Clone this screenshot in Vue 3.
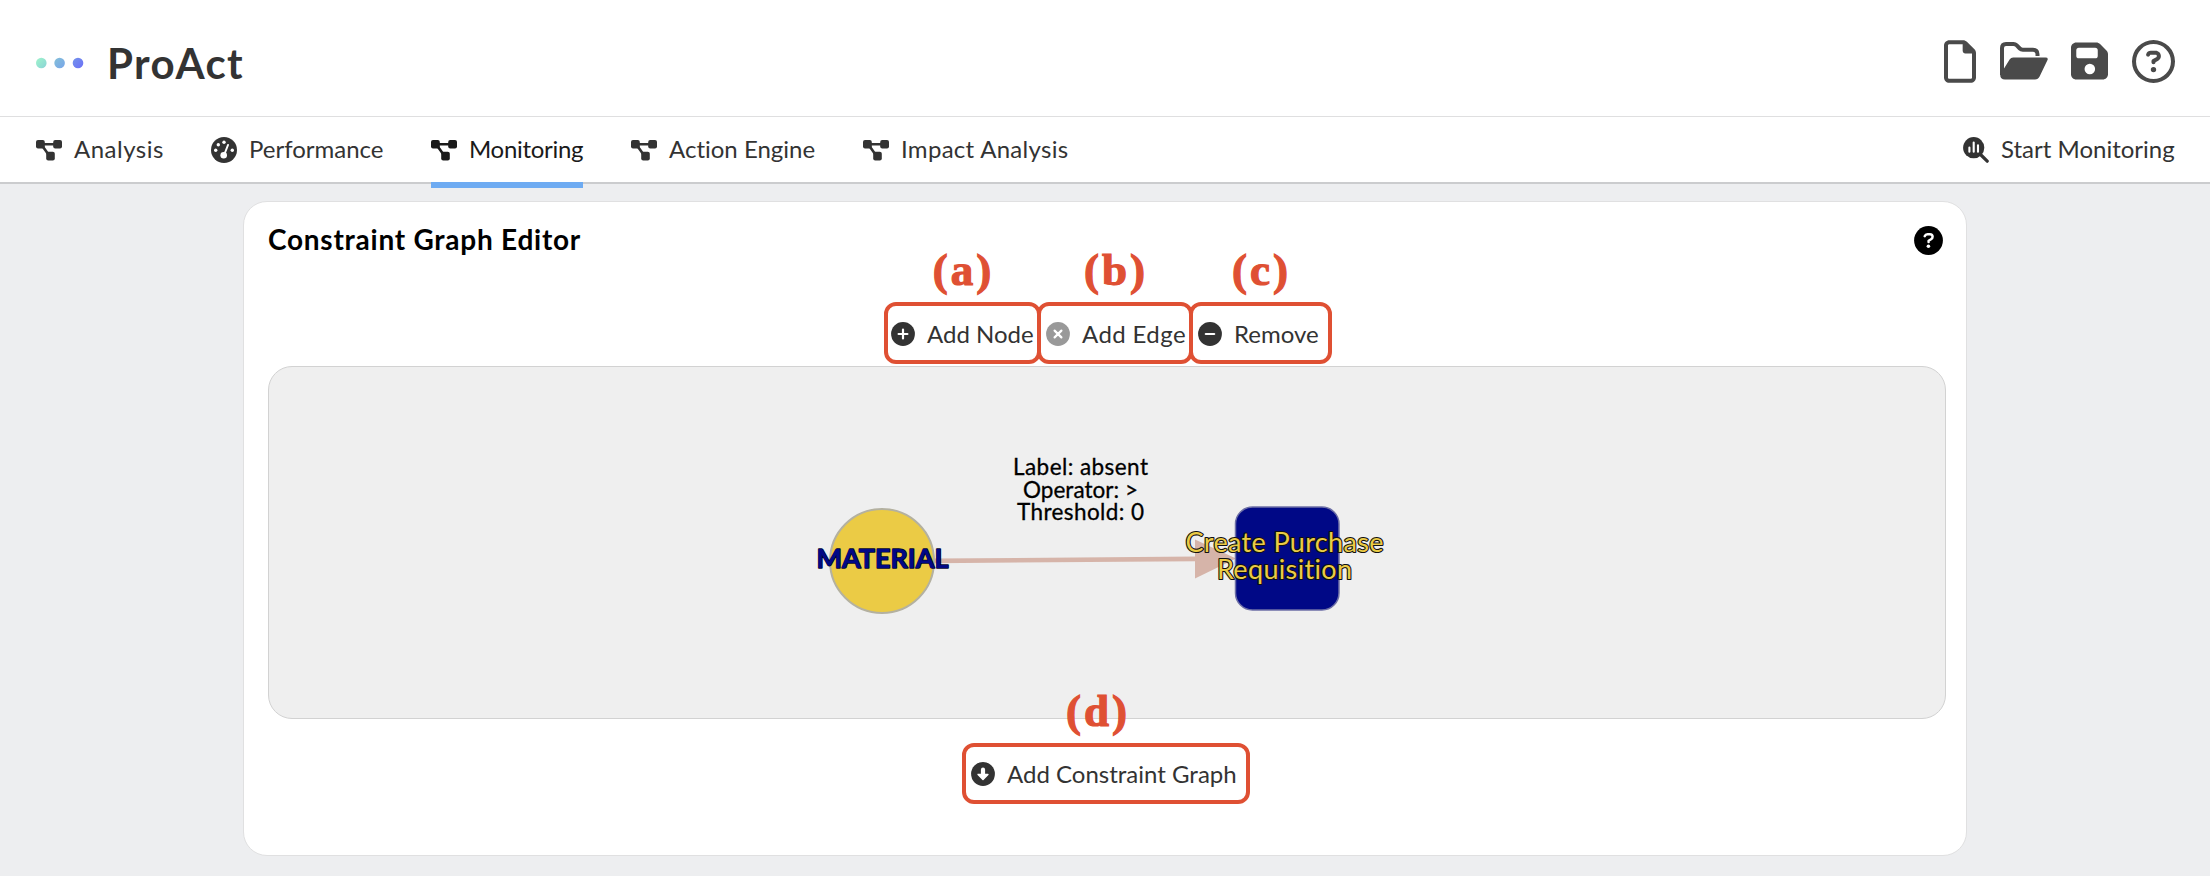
<script setup>
const tabs = [
  { key: 'analysis', label: 'Analysis', icon: 'nodes' },
  { key: 'performance', label: 'Performance', icon: 'gauge' },
  { key: 'monitoring', label: 'Monitoring', icon: 'nodes', active: true },
  { key: 'action', label: 'Action Engine', icon: 'nodes' },
  { key: 'impact', label: 'Impact Analysis', icon: 'nodes' },
]

const tools = [
  { key: 'add-node', label: 'Add Node', tag: '(a)', icon: 'M12 7.6v8.8M7.6 12h8.8' },
  { key: 'add-edge', label: 'Add Edge', tag: '(b)', icon: 'M8.6 8.6l6.8 6.8M15.4 8.6l-6.8 6.8', disabled: true },
  { key: 'remove', label: 'Remove', tag: '(c)', icon: 'M7.8 12h8.4' },
]
</script>

<template>
  <div class="app">
    <header class="header">
      <svg class="logo" width="48" height="12" viewBox="0 0 48 12">
        <defs>
          <linearGradient id="dotA" x1="0" y1="0" x2="1" y2="1"><stop offset="0" stop-color="#9ff5cb" /><stop offset="1" stop-color="#8ad2d6" /></linearGradient>
          <linearGradient id="dotB" x1="0" y1="0" x2="1" y2="1"><stop offset="0" stop-color="#84c0d8" /><stop offset="1" stop-color="#78a5ea" /></linearGradient>
          <linearGradient id="dotC" x1="0" y1="0" x2="1" y2="1"><stop offset="0" stop-color="#7393ea" /><stop offset="1" stop-color="#6c70f8" /></linearGradient>
        </defs>
        <circle cx="5.3" cy="6" r="5.3" fill="url(#dotA)" />
        <circle cx="23.6" cy="6" r="5.3" fill="url(#dotB)" />
        <circle cx="42" cy="6" r="5.3" fill="url(#dotC)" />
      </svg>
      <h1 class="brand">ProAct</h1>
      <div class="actions">
        <svg class="file" width="32" height="43" viewBox="0 0 384 512"><path fill="currentColor" d="M320 464c8.800 0 16-7.200 16-16V160H256c-17.700 0-32-14.300-32-32V48H64c-8.800 0-16 7.200-16 16V448c0 8.800 7.200 16 16 16H320zM0 64C0 28.700 28.700 0 64 0H229.500c17 0 33.300 6.700 45.300 18.700l90.500 90.500c12 12 18.700 28.300 18.700 45.300V448c0 35.300-28.700 64-64 64H64c-35.300 0-64-28.700-64-64V64z" /></svg>
        <svg class="folder" width="48" height="38" viewBox="0 0 48 38"><path d="M2 33V6q0-4 4-4h7.500q1.800 0 3 1.200l3.300 3.300q1.200 1.200 3 1.200H33q4.500 0 4.500 4.500V14" fill="none" stroke="currentColor" stroke-width="4" /><path d="M2.500 29L9.600 17.500q1.300-2 3.600-2H45.500q3 0 2 2.500L39.600 34.500q-1.500 3-4.600 3H5q-4.800 0-4.800-4.800z" fill="currentColor" /></svg>
        <svg class="save" width="37" height="38" viewBox="0 32 448 448"><path fill="currentColor" fill-rule="evenodd" d="M64 32C28.700 32 0 60.700 0 96V416c0 35.300 28.700 64 64 64H384c35.300 0 64-28.700 64-64V173.300c0-17-6.700-33.300-18.700-45.300L352 50.700C340 38.700 323.700 32 306.700 32H64zm32 64H292a32 32 0 0 1 32 32V192a32 32 0 0 1-32 32H96a32 32 0 0 1-32-32V128a32 32 0 0 1 32-32zM228 288a64 64 0 1 1 0 128 64 64 0 1 1 0-128z" /></svg>
        <svg class="help" width="43" height="43" viewBox="0 0 512 512"><path fill="currentColor" d="M464 256A208 208 0 1 0 48 256a208 208 0 1 0 416 0zM0 256a256 256 0 1 1 512 0A256 256 0 1 1 0 256zm169.800-90.700c7.900-22.300 29.100-37.300 52.800-37.300h58.300c34.900 0 63.100 28.300 63.100 63.100c0 22.600-12.100 43.500-31.700 54.800L280 264.400c-.2 13-10.900 23.600-24 23.600c-13.300 0-24-10.700-24-24V250.500c0-8.600 4.600-16.500 12.100-20.800l44.300-25.400c4.700-2.700 7.600-7.700 7.600-13.100c0-8.400-6.800-15.100-15.100-15.100H222.600c-3.400 0-6.400 2.100-7.500 5.300l-.4 1.200c-4.400 12.500-18.200 19-30.600 14.600s-19-18.200-14.600-30.600l.4-1.200zM224 352a32 32 0 1 1 64 0 32 32 0 1 1-64 0z" /></svg>
      </div>
    </header>

    <nav class="nav">
      <a v-for="tab in tabs" :key="tab.key" class="tab" :class="[tab.key, { active: tab.active }]">
        <svg v-if="tab.icon === 'nodes'" width="26" height="26" viewBox="0 0 26 26">
          <path d="M4 7.300H22M5 7l8.500 12" stroke="currentColor" stroke-width="2.600" />
          <rect x="0" y="3" width="8.800" height="8.600" rx="2" fill="currentColor" />
          <rect x="17.200" y="3" width="8.800" height="8.600" rx="2" fill="currentColor" />
          <rect x="10.200" y="14.800" width="8.600" height="8.600" rx="2" fill="currentColor" />
        </svg>
        <svg v-else width="26" height="26" viewBox="0 0 26 26">
          <circle cx="13" cy="13" r="13" fill="currentColor" />
          <g fill="#fff">
            <circle cx="13" cy="5.300" r="1.700" /><circle cx="7.300" cy="7.700" r="1.700" />
            <circle cx="4.700" cy="13.300" r="1.700" /><circle cx="21.300" cy="13.300" r="1.700" />
            <circle cx="12.700" cy="18.300" r="3.300" />
          </g>
          <path d="M13.300 17.500L17 8" stroke="#fff" stroke-width="2" stroke-linecap="round" />
        </svg>
        <span>{{ tab.label }}</span>
      </a>
      <a class="tab start">
        <svg width="26" height="26" viewBox="0 0 26 26">
          <circle cx="10.700" cy="10.700" r="10.600" fill="currentColor" />
          <path d="M17.500 17.500l6.700 6.700" stroke="currentColor" stroke-width="3.200" stroke-linecap="round" />
          <path d="M6.400 10.500v4.300M10.700 5.500v9.300M15 8.300v6.500" stroke="#fff" stroke-width="2.100" stroke-linecap="round" />
        </svg>
        <span>Start Monitoring</span>
      </a>
    </nav>

    <main class="card">
      <div class="card-head">
        <h2>Constraint Graph Editor</h2>
        <svg width="29" height="29" viewBox="0 0 29 29">
          <circle cx="14.500" cy="14.500" r="14.400" fill="#000" />
          <path d="M10.700 10.200q.8-2 2.800-2h2.300q2.800 0 2.800 2.600 0 1.600-1.500 2.400l-2.500 1.500v1.200" fill="none" stroke="#fff" stroke-width="2.500" stroke-linecap="round" stroke-linejoin="round" />
          <circle cx="14.400" cy="20.200" r="1.800" fill="#fff" />
        </svg>
      </div>

      <div class="toolbar">
        <button v-for="tool in tools" :key="tool.key" class="tool" :class="[tool.key, { disabled: tool.disabled }]">
          <svg width="24" height="24" viewBox="0 0 24 24">
            <circle cx="12" cy="12" r="11.900" fill="currentColor" />
            <path :d="tool.icon" stroke="#fff" stroke-width="2.200" stroke-linecap="round" />
          </svg>
          <span class="label">{{ tool.label }}</span>
          <span class="tag">{{ tool.tag }}</span>
        </button>
      </div>

      <section class="canvas">
        <svg width="1676" height="351" viewBox="269 367 1676 351">
          <path d="M934 560.900L1197 558.900" stroke="#d6b4a9" stroke-width="4.600" />
          <path d="M1195 539.600V578.400L1236 558.400z" fill="#d6b4a9" />
          <circle cx="882" cy="561" r="52" fill="#ebcb45" stroke="#b4b1a0" stroke-width="2" />
          <rect x="1235.500" y="507" width="103.500" height="103" rx="17" fill="#000886" stroke="#6d6fa6" stroke-width="1.500" />
          <g class="edge-label">
            <text x="1080.500" y="475.300" textLength="135">Label: absent</text>
            <text x="1080.500" y="497.800" textLength="115">Operator: &gt;</text>
            <text x="1080.500" y="520.300" textLength="127">Threshold: 0</text>
          </g>
          <text class="node-label source" x="882.500" y="568.300" textLength="132">MATERIAL</text>
          <g class="node-label target">
            <text x="1284.500" y="552" textLength="198">Create Purchase</text>
            <text x="1284.500" y="579.300" textLength="135">Requisition</text>
          </g>
        </svg>
      </section>

      <button class="tool add-graph">
        <svg width="24" height="24" viewBox="0 0 24 24">
          <circle cx="12" cy="12" r="11.900" fill="currentColor" />
          <path d="M12 7.700V12.500" stroke="#fff" stroke-width="4.200" stroke-linecap="round" />
          <path d="M7.100 12.400h9.800L12 17.400z" fill="#fff" stroke="#fff" stroke-width="1.500" stroke-linejoin="round" />
        </svg>
        <span class="label">Add Constraint Graph</span>
        <span class="tag">(d)</span>
      </button>
    </main>
  </div>
</template>

<style>
body {
  margin: 0;
  background: #edeef0;
}
</style>

<style scoped>
.app {
  box-sizing: border-box;
  width: 2210px;
  height: 876px;
  overflow: hidden;
  background: #edeef0;
  color: #333;
  font-family: Lato, "Open Sans", sans-serif;
  font-size: 24px;
  font-variant-ligatures: none;
}
.app svg {
  display: block;
  flex: none;
}
.header {
  box-sizing: border-box;
  display: flex;
  align-items: center;
  height: 117px;
  padding: 10px 35px 0 36px;
  border-bottom: 1px solid #dfdfe0;
  background: #fff;
}
.brand {
  margin: 0 0 0 23px;
  font-size: 42px;
  line-height: 50px;
  font-weight: 700;
  letter-spacing: 1.4px;
}
.actions {
  display: flex;
  align-items: center;
  margin-left: auto;
  margin-bottom: 4px;
  color: #4a4a4a;
}
.folder { margin-left: 24px; }
.save { margin-left: 23px; }
.help { margin-left: 24px; }
.nav {
  box-sizing: border-box;
  display: flex;
  gap: 48px;
  height: 67px;
  padding: 0 36px;
  border-bottom: 2px solid #cbccce;
  background: #fff;
}
.tab {
  box-sizing: border-box;
  display: flex;
  align-items: center;
  gap: 12px;
  height: 71px;
  padding-bottom: 6px;
  white-space: nowrap;
}
.tab span { margin-bottom: 2px; }
.analysis { width: 127px; letter-spacing: 0.5px; }
.performance { width: 172px; }
.monitoring { width: 152px; letter-spacing: -0.3px; }
.action { width: 184px; }
.impact { width: 206px; letter-spacing: 0.3px; }
.start {
  width: 211px;
  margin-left: auto;
}
.tab.active {
  gap: 12px;
  padding-bottom: 0;
  border-bottom: 6px solid #6eabf2;
  color: #1a1a1a;
}
.card {
  box-sizing: border-box;
  display: flex;
  flex-direction: column;
  width: 1724px;
  height: 655px;
  margin: 17px 0 0 243px;
  padding: 0 20px 0 24px;
  border: 1px solid #e0e0e1;
  border-radius: 24px;
  background: #fff;
}
.card-head {
  display: flex;
  align-items: center;
  justify-content: space-between;
  height: 76px;
  padding: 0 3px 0 0;
  color: #000;
}
.card-head h2 {
  margin: 0 0 3px;
  font-size: 28px;
  font-weight: 700;
  letter-spacing: 0.75px;
}
.toolbar {
  display: flex;
  height: 62px;
  margin: 24px 0 2px 616px;
}
.tool {
  position: relative;
  box-sizing: border-box;
  display: flex;
  align-items: center;
  gap: 12px;
  height: 62px;
  padding: 0 0 0 3px;
  border: 4px solid #df5033;
  border-radius: 12px;
  background: transparent;
  color: #333;
  font: inherit;
  white-space: nowrap;
}
.toolbar .tool svg { margin-top: 1px; }
.add-node { width: 157px; }
.add-edge { width: 156px; margin-left: -4px; padding-left: 5px; letter-spacing: 0.4px; }
.remove { width: 143px; margin-left: -4px; padding-left: 5px; }
.tool.disabled svg { color: #999; }
.tag {
  position: absolute;
  top: -61px;
  left: 1px;
  width: 100%;
  color: #df5033;
  font-family: "Liberation Serif", serif;
  font-size: 45px;
  line-height: 50px;
  font-weight: 700;
  letter-spacing: 3px;
  text-align: center;
  -webkit-text-stroke: 1.2px #df5033;
}
.canvas {
  box-sizing: border-box;
  width: 1678px;
  height: 353px;
  border: 1px solid #d2d2d2;
  border-radius: 24px;
  background: #efefef;
}
.edge-label {
  fill: #000;
  font-size: 22.5px;
  text-anchor: middle;
  stroke: #000;
  stroke-width: 0.3px;
}
.node-label {
  font-size: 27px;
  text-anchor: middle;
  paint-order: stroke;
  stroke: #111;
  stroke-width: 2.2px;
  stroke-linejoin: round;
}
.source {
  fill: #000886;
  font-weight: 700;
  stroke: #00032f;
  stroke-width: 1.4px;
}
.target { fill: #ebcb45; }
.add-graph {
  width: 288px;
  height: 61px;
  margin: 24px 0 0 694px;
  padding-left: 5px;
}
.add-graph .tag { left: -8px; }
</style>
